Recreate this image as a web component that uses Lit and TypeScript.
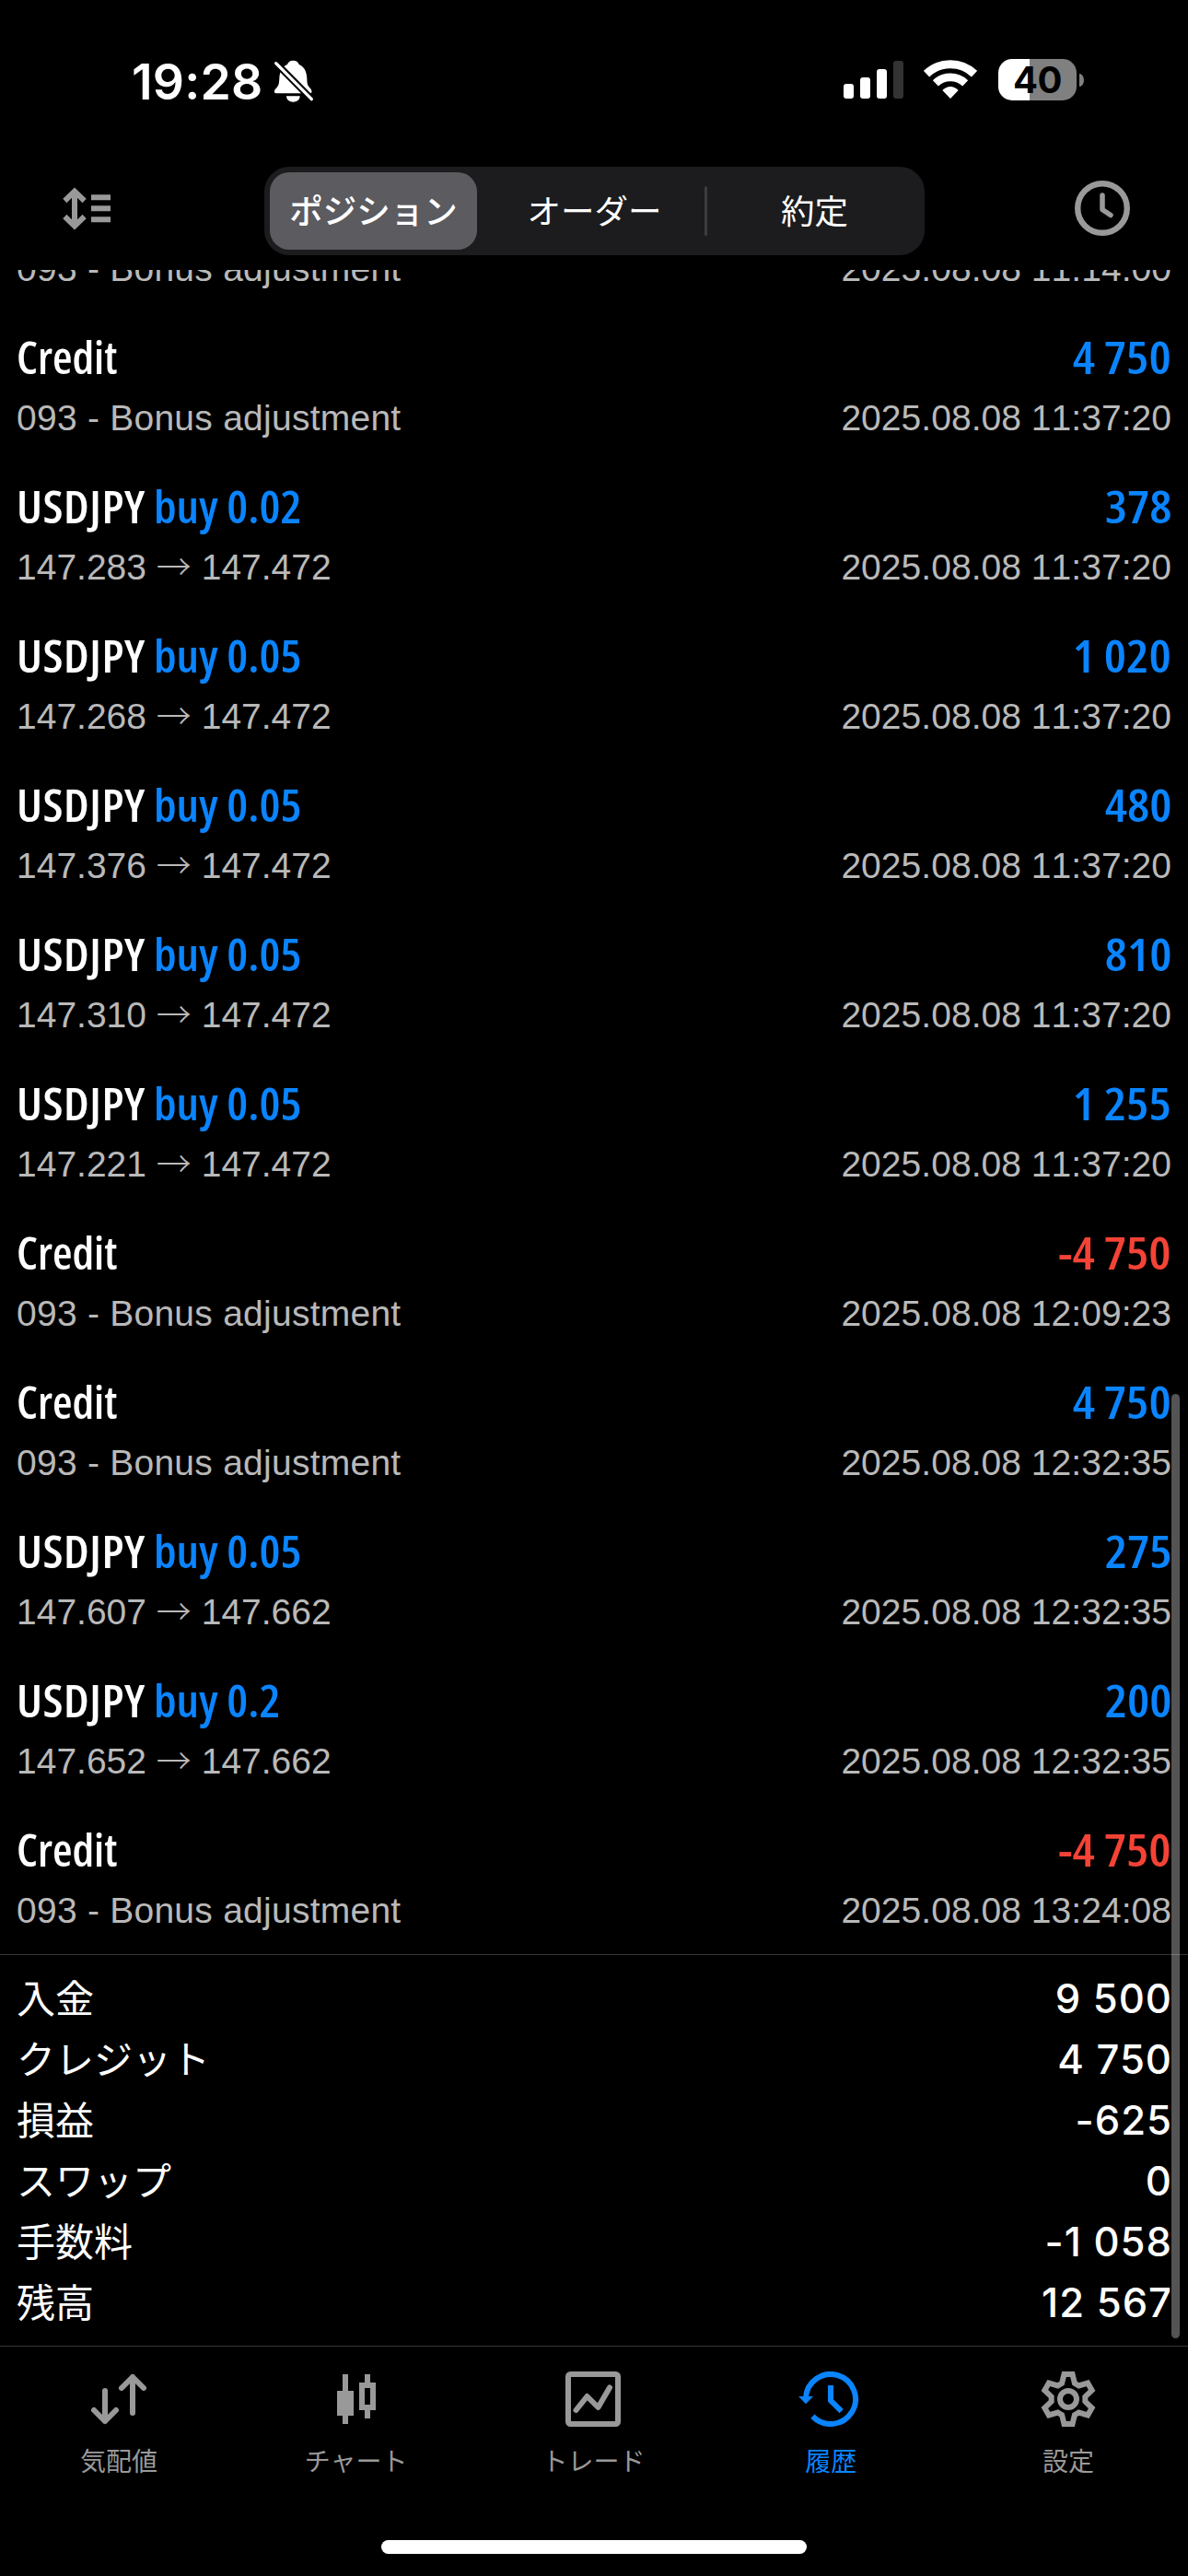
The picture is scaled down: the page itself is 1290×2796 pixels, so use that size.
import { LitElement, html, svg, css, nothing } from "lit";
import { customElement } from "lit/decorators.js";
import { classMap } from "lit/directives/class-map.js";

interface Deal {
  kind: "credit" | "trade";
  volume?: string;
  detail: [string, string?];
  time: string;
  amount: string;
}

const NOTE = "093 - Bonus adjustment";
const credit = (amount: string, time: string): Deal => ({ kind: "credit", detail: [NOTE], time, amount });
const trade = (volume: string, open: string, close: string, amount: string, time: string): Deal => ({
  kind: "trade",
  volume,
  detail: [open, close],
  time,
  amount,
});

const DEALS: Deal[] = [
  credit("-4 750", "11:14:00"),
  credit("4 750", "11:37:20"),
  trade("0.02", "147.283", "147.472", "378", "11:37:20"),
  trade("0.05", "147.268", "147.472", "1 020", "11:37:20"),
  trade("0.05", "147.376", "147.472", "480", "11:37:20"),
  trade("0.05", "147.310", "147.472", "810", "11:37:20"),
  trade("0.05", "147.221", "147.472", "1 255", "11:37:20"),
  credit("-4 750", "12:09:23"),
  credit("4 750", "12:32:35"),
  trade("0.05", "147.607", "147.662", "275", "12:32:35"),
  trade("0.2", "147.652", "147.662", "200", "12:32:35"),
  credit("-4 750", "13:24:08"),
];

const SUMMARY: [string, string][] = [
  ["入金", "9 500"],
  ["クレジット", "4 750"],
  ["損益", "-625"],
  ["スワップ", "0"],
  ["手数料", "-1 058"],
  ["残高", "12 567"],
];

/* Outline of a six-toothed gear centred on the origin. */
const gearPoints = Array.from({ length: 6 }, (_, i) => i * 60 - 90)
  .flatMap((a) => [
    [a - 22, 18.5],
    [a - 9.5, 27.4],
    [a + 9.5, 27.4],
    [a + 22, 18.5],
  ])
  .map(([a, r]) => {
    const t = (a * Math.PI) / 180;
    return `${(r * Math.cos(t)).toFixed(2)},${(r * Math.sin(t)).toFixed(2)}`;
  })
  .join(" ");

const quotesIcon = svg`
  <g stroke-width="6" stroke-linecap="round" stroke-linejoin="round">
    <path d="M-15 -9V24M-27 12L-15 24L-3 12"/>
    <path d="M15 15V-24M3 -12L15 -24L27 -12"/>
  </g>`;
const chartIcon = svg`
  <path stroke-width="6" d="M-12 -27V27M12 -27V-15M12 12V21"/>
  <path stroke-width="6" d="M6 -15H18V9H6Z"/>
  <rect x="-21" y="-9" width="18" height="27" fill="currentColor" stroke="none"/>`;
const tradeIcon = svg`
  <rect x="-27" y="-27" width="54" height="54" rx="2.500" stroke-width="6"/>
  <path stroke-width="6" stroke-linecap="round" stroke-linejoin="round" d="M-18.500 12L-6.500 -3L5.500 9L18 -12.500"/>`;
const historyIcon = svg`
  <path stroke-width="6" d="M-27 -1A27 27 0 1 1 -19.600 18.600"/>
  <path stroke-width="6" d="M0 -15V1.500L11.700 13.200"/>
  <path fill="currentColor" stroke="none" d="M-35 -3H-19L-27 5.300Z"/>`;
const settingsIcon = svg`
  <polygon stroke-width="6" points=${gearPoints}/>
  <circle r="9" stroke-width="6"/>`;

const TABS = [
  { label: "気配値", icon: quotesIcon },
  { label: "チャート", icon: chartIcon },
  { label: "トレード", icon: tradeIcon },
  { label: "履歴", icon: historyIcon, active: true },
  { label: "設定", icon: settingsIcon },
];

@customElement("status-bar")
export class StatusBar extends LitElement {
  static styles = css`
    :host {
      display: flex;
      align-items: flex-start;
      height: 181px;
      box-sizing: border-box;
      padding: 64px 113px 0 143px;
      color: #fff;
    }
    .time {
      font: 600 53.500px/49px Inter, sans-serif;
      letter-spacing: 0.2px;
      width: 154px;
      white-space: nowrap;
    }
    .spacer { flex: 1; }
    svg { display: block; }
    .wifi { margin: 0 23px 0 22px; }
    .signal { margin-top: 2px; }
    .battery {
      width: 85px;
      height: 45px;
      border-radius: 15px;
      background: linear-gradient(90deg, #fff 34px, #808080 34px);
      color: #000;
      font: 700 40px/46px Inter, sans-serif;
      text-align: center;
      letter-spacing: -0.5px;
    }
    .nub {
      width: 5px;
      height: 14px;
      margin: 16px 0 0 3px;
      border-radius: 0 5px 5px 0 / 0 7px 7px 0;
      background: #808080;
    }
  `;
  render() {
    return html`
      <div class="time">19:28</div>
      <svg width="44" height="48" viewBox="741 42 132 144">
        <path
          fill="#fff"
          d="M805 47C794 47 788 53 786 60C768 68 761 84 760 105C759 125 757 130 749 138C744 143 743 147 744 150C745 153 748 154 752 154H858C864 154 867 150 865 146C864 142 864 141 861 138C853 130 850 125 850 105C849 84 842 68 824 60C822 53 816 47 805 47ZM783 163H827C827 176 816 182 805 182C794 182 783 176 783 163Z"
        />
        <path stroke="#000" stroke-width="22" d="M740 46L874 182" />
        <path stroke="#fff" stroke-width="10" stroke-linecap="round" d="M749 56L865 173" />
      </svg>
      <div class="spacer"></div>
      <svg class="signal" width="65" height="41" viewBox="0 0 65 41" fill="#fff">
        <rect y="25" width="11" height="16" rx="3" />
        <rect x="18" y="18" width="11" height="23" rx="3" />
        <rect x="36" y="9" width="11" height="32" rx="3" />
        <rect x="54" width="11" height="41" rx="3" fill="#333" />
      </svg>
      <svg class="wifi" width="58" height="44" viewBox="310 42 174 132" fill="none" stroke="#fff">
        <path stroke-width="27" d="M319 90.500A112.500 112.500 0 0 1 475 90.500" />
        <path stroke-width="26" d="M348.500 121A70 70 0 0 1 445.500 121" />
        <path fill="#fff" stroke="none" d="M397 171L371 144Q397 120 423 144Z" />
      </svg>
      <div class="battery">40</div>
      <div class="nub"></div>
    `;
  }
}

@customElement("history-toolbar")
export class HistoryToolbar extends LitElement {
  static styles = css`
    :host {
      display: flex;
      align-items: flex-start;
      height: 112px;
      padding-left: 68px;
      color: #999;
    }
    svg { display: block; }
    .sort { margin-top: 22px; }
    .clock { margin: 15px 0 0 163px; }
    .segments {
      display: grid;
      grid-template-columns: repeat(3, 239px);
      height: 96px;
      margin-left: 167px;
      border-radius: 27px;
      background: #1c1c1e;
      color: #fff;
      font: 400 36.500px/84px "Noto Sans CJK JP", sans-serif;
      text-align: center;
    }
    .segment {
      box-sizing: border-box;
      margin: 6px 7px;
      border-radius: 21px;
      height: 84px;
      line-height: 82px;
      white-space: nowrap;
    }
    .selected { margin: 6px 8px 6px 6px; background: #5b5b60; font-weight: 500; }
    .last { display: flex; justify-content: center; margin: 6px 0; }
    .last::before {
      content: "";
      width: 3px;
      height: 54px;
      margin: 15px auto 0 0;
      border-radius: 2px;
      background: #3c3c3f;
    }
    .last::after { content: ""; width: 3px; margin-left: auto; }
  `;
  render() {
    return html`
      <svg class="sort" width="52" height="47" viewBox="54 458 156 141" fill="none" stroke="currentColor" stroke-width="18">
        <path d="M93 474V583M61 503L93 472L125 503M61 554L93 585L125 554M147 492H210M147 528H210M147 564H210" />
      </svg>
      <div class="segments">
        <div class="segment selected">ポジション</div>
        <div class="segment">オーダー</div>
        <div class="segment last">約定</div>
      </div>
      <svg class="clock" width="60" height="60" viewBox="-30 -30 60 60" fill="none" stroke="currentColor">
        <circle r="26.800" stroke-width="6.400" />
        <path stroke-width="5.500" stroke-linecap="round" stroke-linejoin="round" d="M0 -14V1.500L9 7.500" />
      </svg>
    `;
  }
}

@customElement("app-root")
export class AppRoot extends LitElement {
  static styles = css`
    :host {
      display: flex;
      flex-direction: column;
      position: relative;
      width: 1290px;
      height: 2796px;
      overflow: hidden;
      background: #000;
      color: #fff;
    }
    .deals { height: 1828px; overflow: hidden; }
    .list { margin-top: -114px; }
    .deal {
      box-sizing: border-box;
      height: 162px;
      padding: 15px 18px 0;
      white-space: nowrap;
    }
    .line { display: flex; justify-content: space-between; }
    .title {
      font: 600 48px/64px "Open Sans", sans-serif;
      font-stretch: 75%;
    }
    .name { display: flex; }
    .credit { transform: scaleX(1.03); transform-origin: left; }
    .symbol {
      width: 149px;
      letter-spacing: 0.5px;
      transform: scaleX(1.08);
      transform-origin: left;
    }
    .order { transform: scaleX(1.07); transform-origin: left; }
    .amount { transform: scaleX(1.13); transform-origin: right; }
    .blue { color: #0a84ff; }
    .red { color: #f44336; }
    .sub {
      margin-top: 10px;
      color: #b9b9b9;
      font: 400 39px/48px "Liberation Sans", Arial, sans-serif;
    }
    .note { letter-spacing: 0.25px; }
    .date { font-kerning: none; letter-spacing: 0.04px; }
    .arrow { font: 300 38px/1px "Noto Sans CJK JP", sans-serif; }
    .summary {
      box-sizing: border-box;
      height: 425px;
      padding: 14px 18px 0;
      border-top: 1px solid #363638;
    }
    .total { display: flex; justify-content: space-between; height: 66px; }
    .label { font: 400 42px/62px "Noto Sans CJK JP", sans-serif; }
    .value {
      margin-right: -1px;
      font: 500 43.600px/68px Inter, sans-serif;
      letter-spacing: 1px;
    }
    .tabs {
      display: grid;
      grid-template-columns: repeat(5, 1fr);
      height: 183px;
      padding: 27px 1px 0 0;
      border-top: 1px solid #363638;
    }
    .tab {
      display: flex;
      flex-direction: column;
      align-items: center;
      gap: 18px;
      color: #999;
      font: 400 28px/36px "Noto Sans CJK JP", sans-serif;
    }
    .tab.active { color: #0a84ff; }
    .tab svg { display: block; }
    .home {
      width: 462px;
      height: 15px;
      margin: 0 auto;
      border-radius: 8px;
      background: #fff;
    }
    .scrollbar {
      position: absolute;
      right: 9px;
      top: 1513px;
      width: 9px;
      height: 1025px;
      border-radius: 5px;
      background: rgba(255, 255, 255, 0.33);
    }
  `;

  private renderDeal(d: Deal) {
    const red = d.amount.startsWith("-");
    return html`
      <div class="deal">
        <div class="line title">
          ${d.kind === "credit"
            ? html`<span class="credit">Credit</span>`
            : html`<span class="name"><span class="symbol">USDJPY</span><span class="order blue">buy ${d.volume}</span></span>`}
          <span class=${classMap({ amount: true, red, blue: !red })}>${d.amount}</span>
        </div>
        <div class="line sub">
          <span class=${classMap({ note: d.kind === "credit" })}
            >${d.detail[0]}${d.detail[1] ? html` <span class="arrow">→</span> ${d.detail[1]}` : nothing}</span
          >
          <span class="date">2025.08.08 ${d.time}</span>
        </div>
      </div>
    `;
  }

  render() {
    return html`
      <status-bar></status-bar>
      <history-toolbar></history-toolbar>
      <div class="deals"><div class="list">${DEALS.map((d) => this.renderDeal(d))}</div></div>
      <div class="summary">
        ${SUMMARY.map(
          ([label, value]) => html`<div class="total"><span class="label">${label}</span><span class="value">${value}</span></div>`
        )}
      </div>
      <div class="tabs">
        ${TABS.map(
          (t) => html`
            <div class=${classMap({ tab: true, active: !!t.active })}>
              <svg width="72" height="60" viewBox="-36 -30 72 60" fill="none" stroke="currentColor">${t.icon}</svg>
              <span>${t.label}</span>
            </div>
          `
        )}
      </div>
      <div class="home"></div>
      <div class="scrollbar"></div>
    `;
  }
}
